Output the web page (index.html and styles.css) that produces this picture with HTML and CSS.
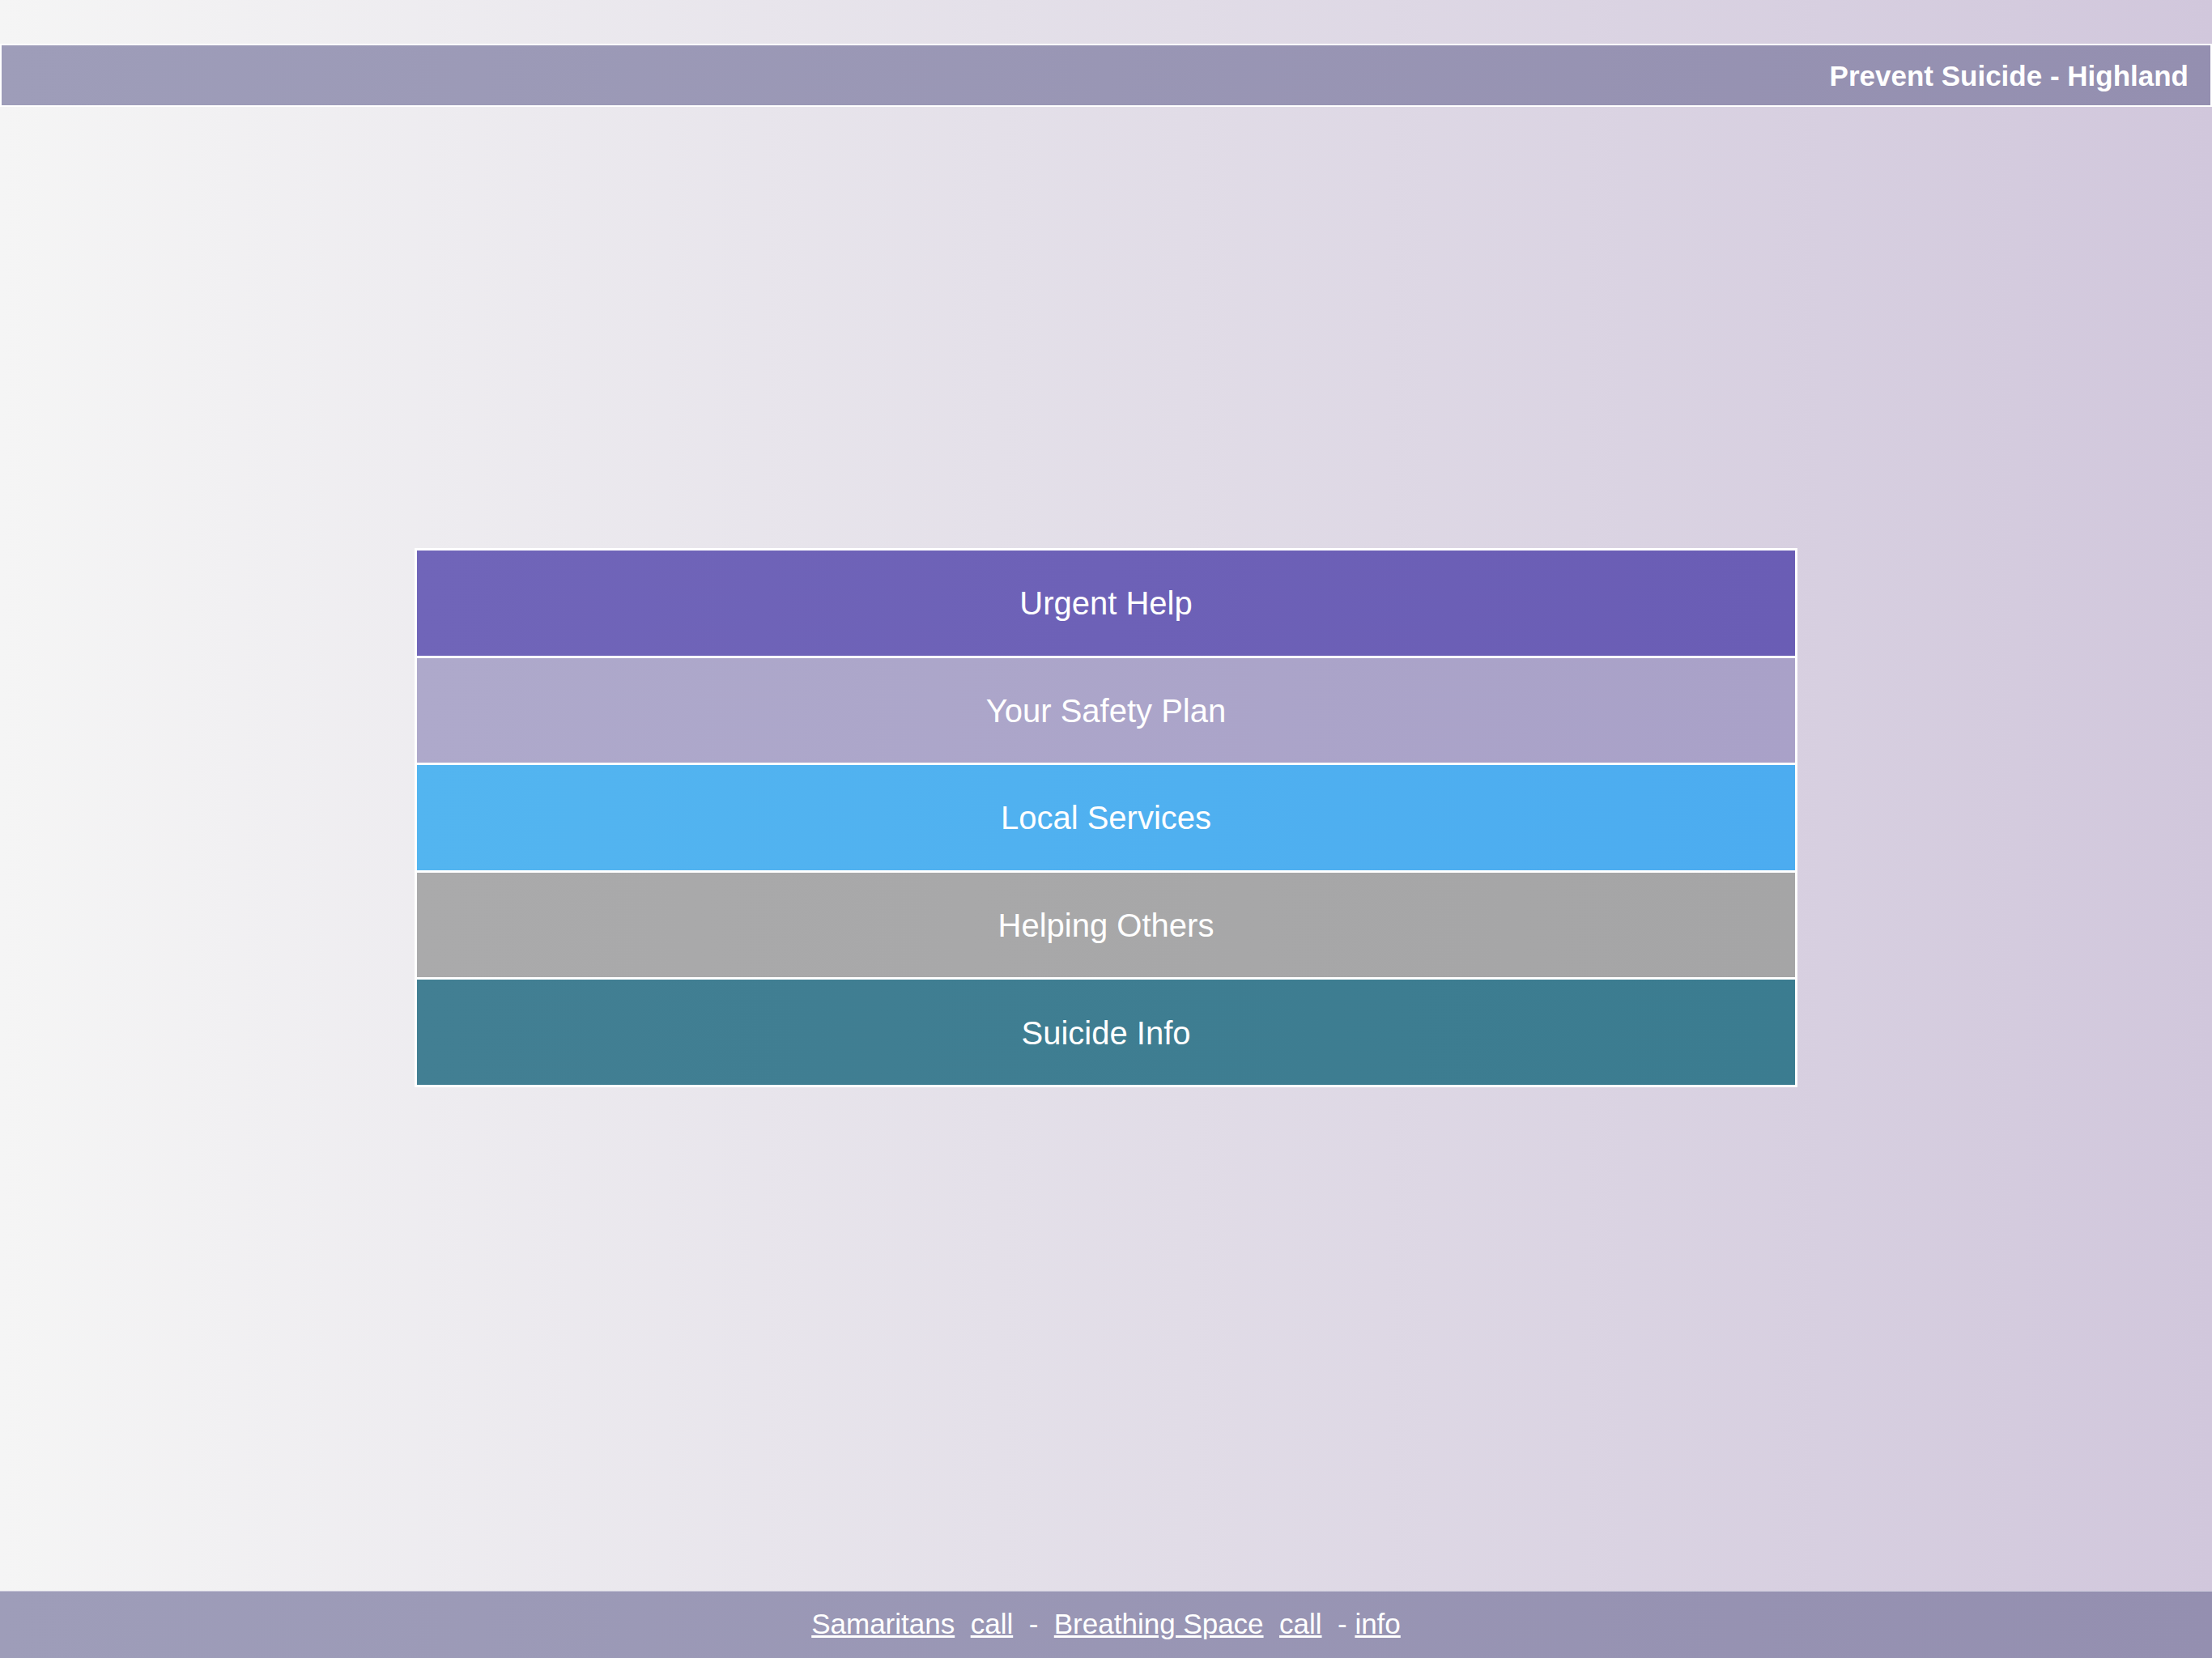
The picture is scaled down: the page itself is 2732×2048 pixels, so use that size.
FILE: index.html
```html
<!DOCTYPE html>
<html lang="en">
<head>
  <meta charset="UTF-8">
  <meta name="viewport" content="width=device-width, initial-scale=1.0">
  <title>Prevent Suicide - Highland</title>
  <link rel="stylesheet" href="styles.css">
</head>
<body>
  <!-- Title bar -->
  <header class="title-bar">
    <span class="title">Prevent Suicide - Highland</span>
  </header>

  <!-- Main menu -->
  <main class="main-content">
    <nav class="menu">
      <a href="#" class="menu-item urgent">Urgent Help</a>
      <a href="#" class="menu-item safety">Your Safety Plan</a>
      <a href="#" class="menu-item local">Local Services</a>
      <a href="#" class="menu-item helping">Helping Others</a>
      <a href="#" class="menu-item info">Suicide Info</a>
    </nav>
  </main>

  <!-- Footer -->
  <footer class="footer">
    <a href="#">Samaritans</a>&nbsp; <a href="#">call</a>&nbsp; -&nbsp; <a href="#">Breathing Space</a>&nbsp; <a href="#">call</a>&nbsp; - <a href="#">info</a>
  </footer>
</body>
</html>
```

FILE: styles.css
```css
/* General Styles */
html, body {
  height: 100%;
}

body {
  margin: 0;
  font-family: "Liberation Sans", Arial, Helvetica, sans-serif;
  background: linear-gradient(to right, #f5f5f5 0%, #e4e0e9 45%, #d1c7dc 100%);
  display: flex;
  flex-direction: column;
  color: white;
  overflow: hidden;
}

/* Title bar */
.title-bar {
  margin-top: 54px;
  height: 78px;
  box-sizing: border-box;
  border: 2px solid white;
  background: linear-gradient(to right, #9e9db9, #948fb0);
  display: flex;
  align-items: center;
  justify-content: flex-end;
  padding: 2px 27px 0 0;
}

.title {
  font-size: 35px;
  font-weight: bold;
}

/* Main Content */
.main-content {
  flex: 1;
  display: flex;
  justify-content: center;
  align-items: center;
  padding-bottom: 77px;
}

.menu {
  width: 1708px;
  height: 666px;
  box-sizing: border-box;
  border: 3px solid white;
  background-color: white;
  display: flex;
  flex-direction: column;
  gap: 3px;
}

.menu-item {
  flex: 1;
  display: flex;
  align-items: center;
  justify-content: center;
  padding-top: 2px;
  color: white;
  text-decoration: none;
  font-size: 40px;
}

.urgent {
  background: linear-gradient(to right, #7065b9, #6a5db5);
}

.safety {
  background: linear-gradient(to right, #aea9cb, #a9a1c8);
}

.local {
  background: linear-gradient(to right, #53b5f0, #4cacf0);
}

.helping {
  background: linear-gradient(to right, #aaaaab, #a5a5a6);
}

.info {
  background: linear-gradient(to right, #427f93, #3b7c90);
}

/* Footer */
.footer {
  height: 83px;
  box-sizing: border-box;
  background: linear-gradient(to right, #9e9db9, #948fb0);
  border-top: 1px solid #c8c6d8;
  display: flex;
  align-items: center;
  justify-content: center;
  white-space: pre;
  font-size: 35px;
  padding-bottom: 2px;
}

.footer a {
  color: white;
  text-decoration: underline;
}
```
